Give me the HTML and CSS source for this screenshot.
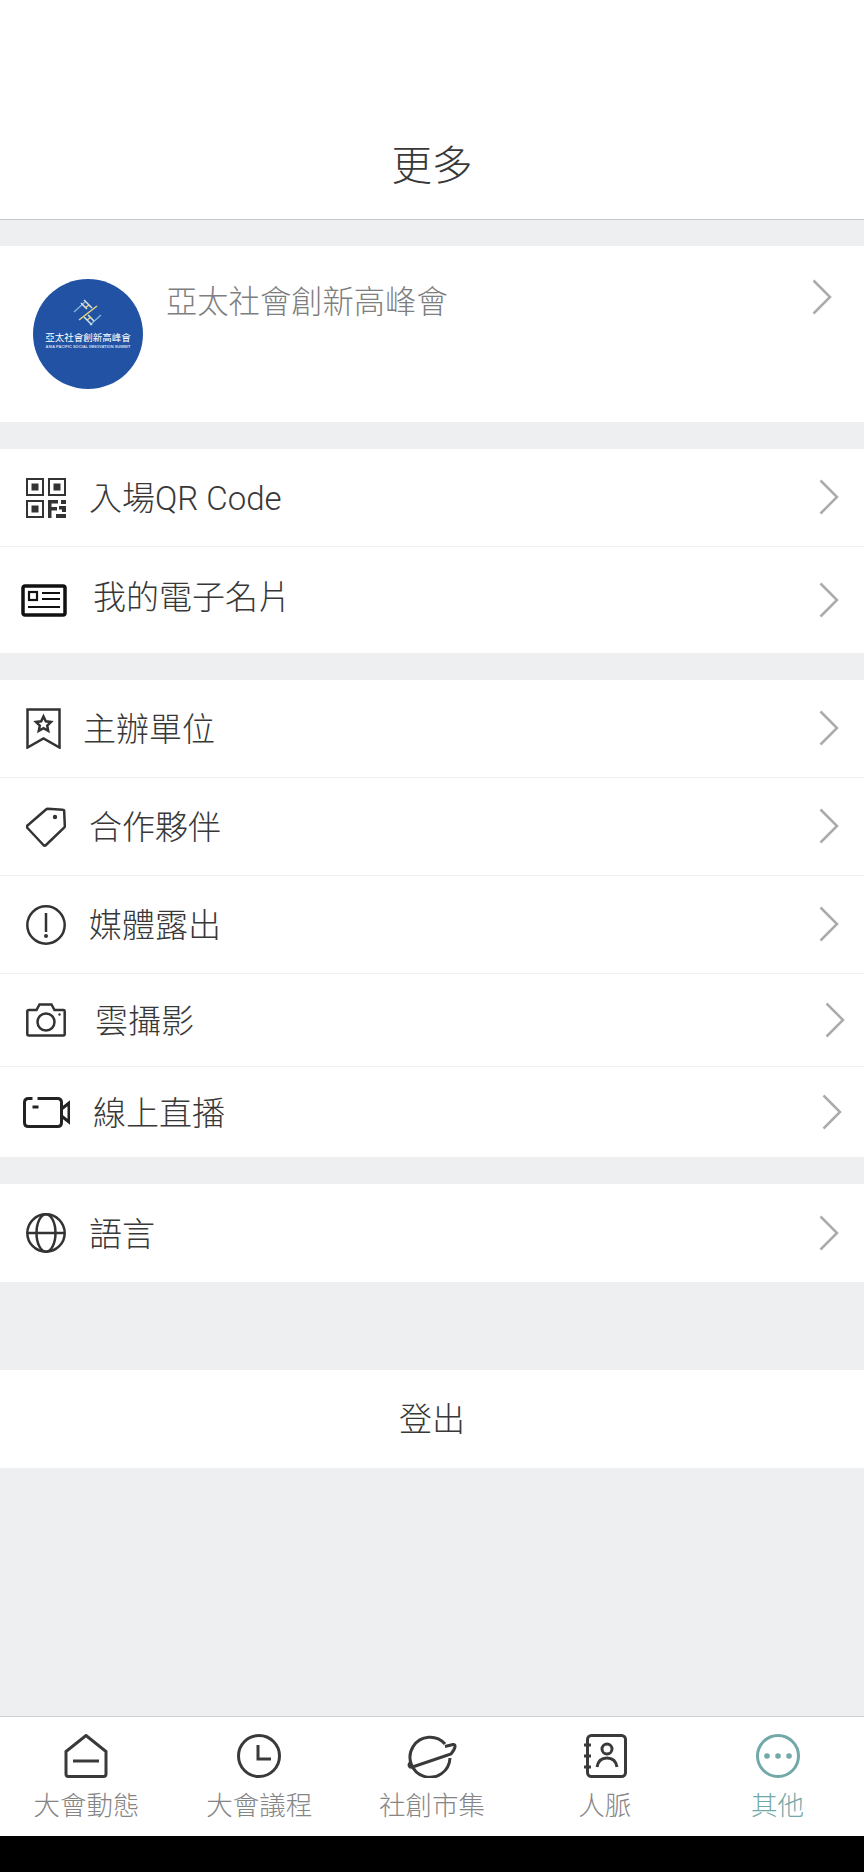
FILE: index.html
```html
<!DOCTYPE html>
<html lang="zh-Hant">
<head>
  <meta charset="UTF-8"/>
  <meta name="viewport" content="width=device-width, initial-scale=1.0"/>
  <title>更多</title>
  <link rel="stylesheet" href="styles.css">
</head>
<body>
  <div class="app">
    <header class="top-bar">
      <h1>更多</h1>
    </header>

    <section class="profile">
      <div class="logo">
        <svg class="logo-mark" viewBox="0 0 30 30">
          <g class="mark-blue">
            <path d="M1 14 12 4M17 27 28 17"/>
          </g>
          <g class="mark-white">
            <path d="M11 2 19 10M8 5 14 11M11 19 19 27M15 17 21 23"/>
          </g>
          <g class="mark-yellow">
            <path d="M6 22 24 8M12 10 16 7M14 22 18 19"/>
          </g>
        </svg>
        <span class="logo-name">亞太社會創新高峰會</span>
        <span class="logo-sub">ASIA PACIFIC SOCIAL INNOVATION SUMMIT</span>
      </div>
      <p class="profile-name">亞太社會創新高峰會</p>
      <svg class="chevron profile-chevron" viewBox="0 0 20 36"><path d="M1.5 1.5 18 18 1.5 34.5"/></svg>
    </section>

    <section class="group">
      <a class="row row-qr">
        <svg class="icon icon-qr" viewBox="0 0 40 40">
          <path d="M1 1h16v16H1zM23 1h16v16H23zM1 23h16v16H1z"/>
          <path class="solid" d="M5.500 5.500h7v7h-7zM27.500 5.500h7v7h-7zM5.500 27.500h7v7h-7z"/>
          <path class="solid" d="M22 22h10v3.500h-6.500V29H31v3.500h-5.500V40H22zM35 22h5v4h-5zM33 28h7v6h-4v-2.500h-3zM30 36h10v4H30z"/>
        </svg>
        <span class="label">入場QR Code</span>
        <svg class="chevron" viewBox="0 0 20 36"><path d="M1.5 1.5 18 18 1.5 34.5"/></svg>
      </a>
      <a class="row row-card">
        <svg class="icon icon-card" viewBox="0 0 46 33">
          <rect class="thick" x="2" y="2" width="42" height="29" rx="2"/>
          <rect x="8" y="8" width="8" height="8"/>
          <path d="M21 9h18M21 15h18M7 23h32"/>
        </svg>
        <span class="label">我的電子名片</span>
        <svg class="chevron" viewBox="0 0 20 36"><path d="M1.5 1.5 18 18 1.5 34.5"/></svg>
      </a>
    </section>

    <section class="group">
      <a class="row row-star">
        <svg class="icon icon-star" viewBox="0 0 35 41">
          <path d="M1.5 1.5h32v38l-16-9-16 9z"/>
          <path d="M17.5 8.5l2.3 4.8 5.2.7-3.8 3.6 1 5.2-4.7-2.6-4.7 2.6 1-5.2L10 14l5.2-.7z"/>
        </svg>
        <span class="label">主辦單位</span>
        <svg class="chevron" viewBox="0 0 20 36"><path d="M1.5 1.5 18 18 1.5 34.5"/></svg>
      </a>
      <a class="row row-tag">
        <svg class="icon icon-tag" viewBox="0 0 40 40">
          <path d="M1.500 18.500 20 2.500c.5-.5 1-.7 1.700-.7l15 .9c1 0 1.500.6 1.500 1.500l.6 14.800c0 .7-.2 1.200-.7 1.700L20 38c-.8.8-1.800.8-2.600 0L1.500 21c-.7-.7-.7-1.800 0-2.500z"/>
          <circle class="solid" cx="29" cy="10" r="2.200"/>
        </svg>
        <span class="label">合作夥伴</span>
        <svg class="chevron" viewBox="0 0 20 36"><path d="M1.5 1.5 18 18 1.5 34.5"/></svg>
      </a>
      <a class="row row-alert">
        <svg class="icon icon-alert" viewBox="0 0 40 40">
          <circle cx="20" cy="20" r="18.700"/>
          <path d="M20 8v19"/>
          <circle class="solid" cx="20" cy="31" r="2"/>
        </svg>
        <span class="label">媒體露出</span>
        <svg class="chevron" viewBox="0 0 20 36"><path d="M1.5 1.5 18 18 1.5 34.5"/></svg>
      </a>
      <a class="row row-camera">
        <svg class="icon icon-camera" viewBox="0 0 40 34">
          <path d="M3 7h7.500l3-5.500h12l3 5.500H37.500c.7 0 1.200.5 1.200 1.200V31c0 .9-.6 1.500-1.500 1.500H2.800c-.9 0-1.500-.6-1.500-1.500V8.500C1.300 7.600 2.100 7 3 7z"/>
          <circle cx="20" cy="19" r="8.500"/>
          <circle class="solid" cx="33.500" cy="11.500" r="1.200"/>
        </svg>
        <span class="label">雲攝影</span>
        <svg class="chevron" viewBox="0 0 20 36"><path d="M1.5 1.500 18 18 1.500 34.500"/></svg>
      </a>
      <a class="row row-video">
        <svg class="icon icon-video" viewBox="0 0 47 31">
          <path d="M9.500 1.500H5.500c-2.500 0-4 1.500-4 4v20c0 2.500 1.500 4 4 4h29c2.500 0 4-1.500 4-4v-20c0-2.500-1.500-4-4-4H14.500"/>
          <path d="M38.500 12 46 6v19l-7.500-6"/>
          <path d="M9.500 10h6"/>
        </svg>
        <span class="label">線上直播</span>
        <svg class="chevron" viewBox="0 0 20 36"><path d="M1.500 1.500 18 18 1.500 34.500"/></svg>
      </a>
    </section>

    <section class="group">
      <a class="row row-globe">
        <svg class="icon icon-globe" viewBox="0 0 40 40">
          <circle cx="20" cy="20" r="18.700"/>
          <ellipse cx="20" cy="20" rx="9.500" ry="18.700"/>
          <path d="M1.300 20h37.400"/>
        </svg>
        <span class="label">語言</span>
        <svg class="chevron" viewBox="0 0 20 36"><path d="M1.500 1.500 18 18 1.500 34.500"/></svg>
      </a>
    </section>

    <a class="logout">登出</a>

    <nav class="tab-bar">
      <a class="tab">
        <svg class="tab-icon" viewBox="0 0 44 44">
          <path d="M22 1.500 42 17.500V40c0 1.500-1 2.500-2.500 2.500h-35C3 42.500 2 41.500 2 40V17.500z"/>
          <path d="M9 27h26"/>
        </svg>
        <span>大會動態</span>
      </a>
      <a class="tab">
        <svg class="tab-icon" viewBox="0 0 44 44">
          <circle cx="22" cy="22" r="20.500"/>
          <path d="M21 11v14h13"/>
        </svg>
        <span>大會議程</span>
      </a>
      <a class="tab">
        <svg class="tab-icon tab-icon-planet" viewBox="0 0 50 44">
          <path d="M38 10A20 20 0 1 0 43 24"/>
          <path d="M38 12.500 46 10.500C49 10 49 14 44 20L5.500 33C2 34 1 30.500 3.500 28.500"/>
        </svg>
        <span>社創市集</span>
      </a>
      <a class="tab">
        <svg class="tab-icon" viewBox="0 0 44 44">
          <rect x="4.500" y="1.500" width="38" height="41" rx="4"/>
          <circle cx="24" cy="15" r="5"/>
          <path d="M14 33c1-6 5-9 10-9s9 3 10 9"/>
          <path d="M1 11h7M1 22h7M1 33h7"/>
        </svg>
        <span>人脈</span>
      </a>
      <a class="tab tab-active">
        <svg class="tab-icon" viewBox="0 0 44 44">
          <circle cx="22" cy="22" r="20.500"/>
          <circle class="solid" cx="11" cy="22" r="2.800"/>
          <circle class="solid" cx="22" cy="22" r="2.800"/>
          <circle class="solid" cx="33" cy="22" r="2.800"/>
        </svg>
        <span>其他</span>
      </a>
    </nav>
    <div class="system-bar"></div>
  </div>
</body>
</html>
```

FILE: styles.css
```css
:root {
  --bg: #eeeff1;
  --text: #383838;
  --muted: #858585;
  --active: #72a8a8;
  --line: #f1f1f1;
}

* {
  margin: 0;
  padding: 0;
  box-sizing: border-box;
}

body {
  font-family: Roboto, 'Noto Sans CJK TC', sans-serif;
  font-weight: 300;
  background-color: var(--bg);
  color: var(--text);
}

.app {
  height: 1872px;
  display: flex;
  flex-direction: column;
}

/* Header */
.top-bar {
  height: 220px;
  background: #fff;
  border-bottom: 1px solid #c6c6c6;
  display: flex;
  justify-content: center;
  align-items: flex-end;
  padding-bottom: 24px;
}

.top-bar h1 {
  font-size: 40.500px;
  font-weight: 300;
  line-height: 58px;
}

/* Profile card */
.profile {
  height: 176px;
  margin-top: 26px;
  background: #fff;
  display: flex;
  align-items: flex-start;
  padding: 33px 33px 0;
}

.logo {
  width: 110px;
  height: 110px;
  border-radius: 50%;
  background: #2152a3;
  color: #fff;
  display: flex;
  flex-direction: column;
  align-items: center;
  padding-top: 19px;
  flex-shrink: 0;
}

.logo-mark {
  width: 30px;
  height: 30px;
  fill: none;
  stroke-width: 1.500;
}

.mark-blue { stroke: #7fb2d6; }
.mark-white { stroke: #d9e4ee; }
.mark-yellow { stroke: #e8d77c; }

.logo-name {
  font-size: 9.500px;
  font-weight: 400;
  line-height: 13px;
  margin-top: 3px;
  white-space: nowrap;
}

.logo-sub {
  font-family: 'Liberation Sans', sans-serif;
  font-size: 4px;
  font-weight: 700;
  line-height: 6px;
  white-space: nowrap;
  color: #cfdcee;
}

.profile-name {
  font-size: 31.300px;
  line-height: 44px;
  color: #7e7e7e;
  margin: 2px 0 0 23px;
}

.chevron {
  width: 20px;
  height: 36px;
  margin-left: auto;
  margin-right: 25px;
  margin-bottom: 1px;
  fill: none;
  stroke: #ababab;
  stroke-width: 2.500;
  flex-shrink: 0;
}

.profile-chevron {
  margin-right: -1px;
}

/* Menu rows */
.group {
  margin-top: 27px;
  background: #fff;
}

.row {
  display: flex;
  align-items: center;
  height: 98px;
  padding-left: 26px;
  gap: 23px;
  border-bottom: 1px solid var(--line);
}

.row:last-child {
  border-bottom: none;
}

.label {
  font-size: 33px;
  line-height: 46px;
  margin-top: 3px;
}

.icon {
  fill: none;
  stroke: #333;
  stroke-width: 2.500;
  flex-shrink: 0;
}

.icon .solid {
  fill: #333;
  stroke: none;
}

.icon-qr { width: 40px; height: 40px; stroke-width: 2; }
.icon-card { width: 46px; height: 33px; stroke: #111; stroke-width: 2.200; }
.icon-card .thick { stroke-width: 3.500; }
.icon-star { width: 35px; height: 41px; }
.icon-tag { width: 40px; height: 40px; }
.icon-alert { width: 40px; height: 40px; }
.icon-camera { width: 40px; height: 34px; }
.icon-video { width: 47px; height: 31px; stroke: #222; stroke-width: 3; }
.icon-globe { width: 40px; height: 40px; }

.row-card { height: 106px; padding-left: 21px; gap: 26px; }
.row-card .label { margin-top: 0; margin-bottom: 4px; }
.row-star { gap: 22px; }
.row-camera { gap: 29px; height: 93px; }
.row-camera .chevron { margin-right: 19px; }
.row-video { height: 90px; padding-left: 23px; }
.row-video .chevron { margin-right: 22px; }

.logout {
  display: block;
  margin-top: 88px;
  height: 98px;
  background: #fff;
  text-align: center;
  font-size: 33px;
  line-height: 100px;
}

/* Bottom tabs */
.tab-bar {
  margin-top: auto;
  height: 120px;
  background: #fff;
  border-top: 1px solid #cfcfcf;
  display: grid;
  grid-template-columns: repeat(5, 1fr);
}

.tab {
  display: flex;
  flex-direction: column;
  align-items: center;
  padding-top: 17px;
  font-size: 26.500px;
  line-height: 38px;
  color: var(--muted);
}

.tab-icon {
  width: 44px;
  height: 44px;
  margin-bottom: 9px;
  fill: none;
  stroke: #3a3a3a;
  stroke-width: 3;
}

.tab-icon-planet {
  width: 50px;
}

.tab-active {
  color: var(--active);
}

.tab-active .tab-icon {
  stroke: var(--active);
}

.tab-active .solid {
  fill: var(--active);
  stroke: none;
}

.system-bar {
  height: 36px;
  background: #000;
}
```
